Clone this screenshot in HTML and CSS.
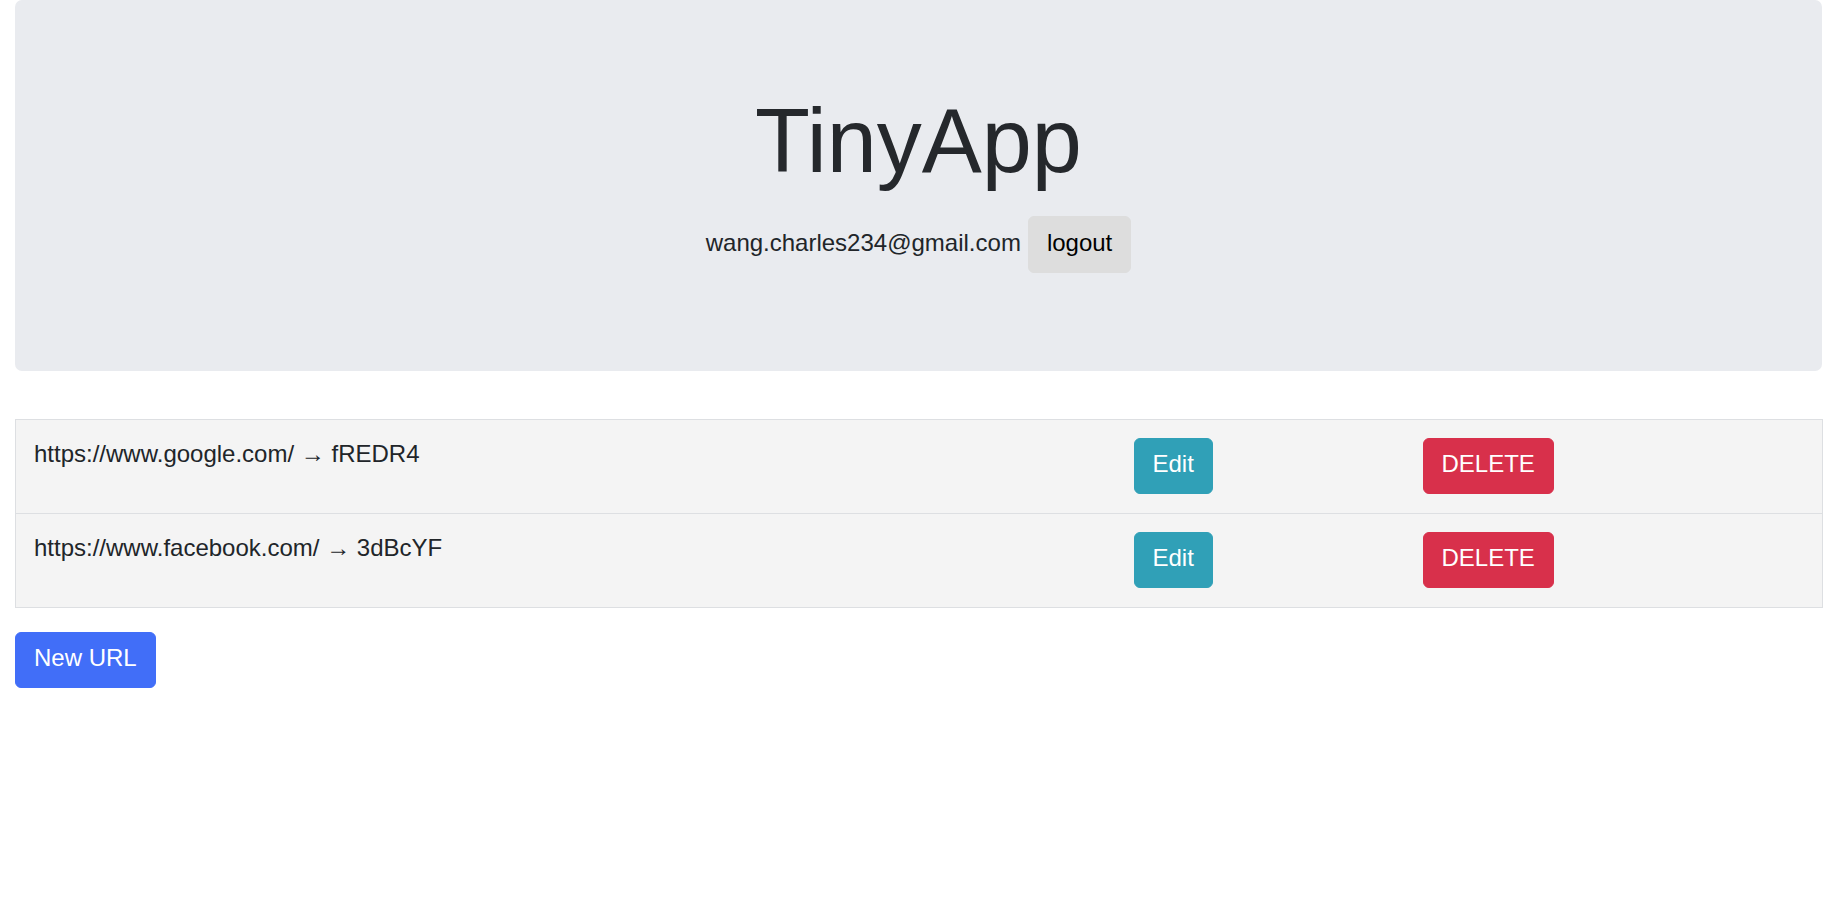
FILE: index.html
```html
<!DOCTYPE html>
<html>
<head>
<meta charset="utf-8">
<title>TinyApp</title>
<link rel="stylesheet" href="styles.css">
</head>
<body>
<div class="container">
  <header class="jumbotron">
    <h1 class="title">TinyApp</h1>
    <div class="user">
      <span class="email">wang.charles234@gmail.com</span>
      <button class="btn btn-logout">logout</button>
    </div>
  </header>
  <table class="urls">
    <colgroup>
      <col class="col-url">
      <col class="col-edit">
      <col class="col-del">
    </colgroup>
    <tbody>
      <tr>
        <td class="cell-text">https://www.google.com/ → fREDR4</td>
        <td><button class="btn btn-edit">Edit</button></td>
        <td><button class="btn btn-delete">DELETE</button></td>
      </tr>
      <tr>
        <td class="cell-text">https://www.facebook.com/ → 3dBcYF</td>
        <td><button class="btn btn-edit">Edit</button></td>
        <td><button class="btn btn-delete">DELETE</button></td>
      </tr>
    </tbody>
  </table>
  <button class="btn btn-new">New URL</button>
</div>
</body>
</html>
```

FILE: styles.css
```css
html, body {
  margin: 0;
  padding: 0;
  background: #ffffff;
}
body {
  font-family: "Liberation Sans", Arial, sans-serif;
  font-size: 24px;
  color: #212529;
}
.container {
  padding: 0 15px;
}
.jumbotron {
  background: #e9ebef;
  border-radius: 7px;
  padding: 96px 32px 98px;
  margin-bottom: 48px;
  text-align: center;
}
.title {
  margin: 0;
  font-size: 90px;
  line-height: 90px;
  font-weight: 400;
  color: #25282c;
}
.user {
  margin-top: 30px;
  display: flex;
  justify-content: center;
  align-items: baseline;
  gap: 7px;
}
.email {
  line-height: 24px;
}
.btn {
  font-family: "Liberation Sans", Arial, sans-serif;
  font-size: 24px;
  line-height: 24px;
  border: 1px solid transparent;
  border-radius: 6px;
  padding: 13px 18px 17px;
  color: #ffffff;
  cursor: pointer;
  display: inline-block;
}
.btn-logout {
  background: #dddddd;
  border-color: #dddddd;
  color: #000000;
  padding: 14px 18px 17px;
}
.urls {
  width: 100%;
  border-collapse: collapse;
  table-layout: fixed;
  border: 1px solid #dddfe2;
  margin-bottom: 24px;
}
.col-url { width: 1100px; }
.col-edit { width: 289px; }
.col-del { width: 418px; }
.urls tr {
  background: #f4f4f4;
  border-top: 1px solid #dddfe2;
}
.urls td {
  padding: 18px 18px 19px;
  vertical-align: top;
}
.cell-text {
  line-height: 32px;
}
.btn-edit {
  background: #30a0b7;
  border-color: #30a0b7;
}
.btn-delete {
  background: #d8304b;
  border-color: #d8304b;
}
.btn-new {
  background: #416ef8;
  border-color: #416ef8;
}
```
